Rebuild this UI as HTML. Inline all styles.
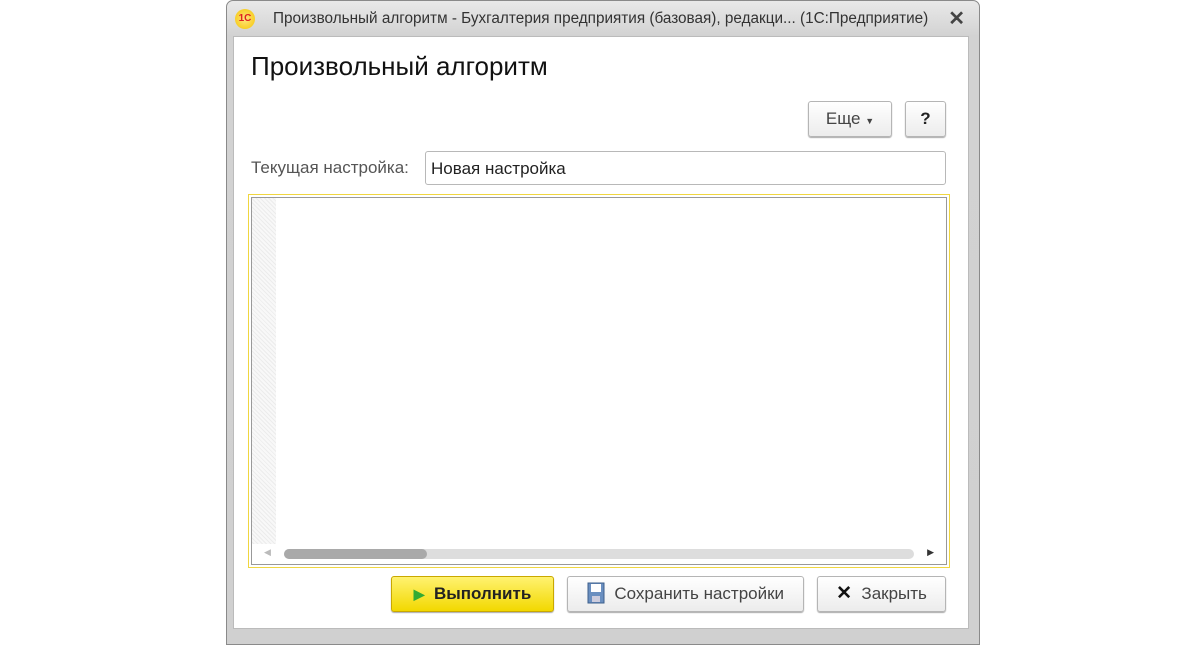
<!DOCTYPE html>
<html><head><meta charset="utf-8"><style>
*{box-sizing:border-box;margin:0;padding:0}
body{width:1200px;height:637px;background:#fff;position:relative;overflow:hidden;font-family:"Liberation Sans",Arial,sans-serif}
.win{position:absolute;left:226px;top:0;width:754px;height:645px;border:1px solid #8a8a8a;border-radius:7px 7px 0 0;background:linear-gradient(#e9e9e9,#d2d2d2 35px,#d0d0d0);}
.title{position:absolute;left:0;top:0;height:35px;width:100%;font-size:15.3px;color:#333;}
.title .t{position:absolute;left:46px;top:9px;}
.logo{position:absolute;left:8px;top:8px;width:20px;height:20px;border-radius:50%;background:radial-gradient(#ffe680,#f5c400);font-size:10px;font-weight:bold;color:#d22;text-align:center;line-height:20px}
.x{position:absolute;right:14px;top:5px;font-size:20px;color:#444;font-weight:bold}
.client{position:absolute;left:6px;top:35px;width:736px;height:593px;background:#fff;border:1px solid #bbb}
.h1{position:absolute;left:17px;top:14px;font-size:26px;color:#111}
.btn{position:absolute;border:1px solid #b5b5b5;border-radius:3px;background:linear-gradient(#fff,#ececec);box-shadow:0 1px 1px #aaa;font-size:17px;color:#444;text-align:center}
.lab{position:absolute;left:17px;top:121px;font-size:17px;color:#555}
.inp{position:absolute;left:191px;top:114px;width:521px;height:34px;border:1px solid #b8b8b8;border-radius:3px;padding:7px 5px;font-size:17px;color:#222}
.area{position:absolute;left:14px;top:157px;width:702px;height:374px;border:1px solid #f0d640}
.inner{position:absolute;left:2px;top:2px;right:2px;bottom:2px;border:1px solid #999}
.gut{position:absolute;left:0;top:0;width:24px;bottom:0;background:repeating-linear-gradient(45deg,#ececec 0 1px,#f8f8f8 1px 3px)}
.sb{position:absolute;left:0;right:0;bottom:0;height:20px;background:#fff}
.track{position:absolute;left:32px;right:32px;top:5px;height:10px;border-radius:5px;background:#ddd}
.thumb{position:absolute;left:0;top:0;width:143px;height:10px;border-radius:5px;background:#a9a9a9}
</style></head><body>
<div class="win">
 <div class="title"><div class="logo">1С</div><div class="t">Произвольный алгоритм - Бухгалтерия предприятия (базовая), редакци... (1С:Предприятие)</div><div class="x">✕</div></div>
 <div class="client">
  <div class="h1">Произвольный алгоритм</div>
  <div class="btn" style="left:574px;top:64px;width:84px;height:36px;line-height:34px">Еще <span style="font-size:9px">▼</span></div>
  <div class="btn" style="left:671px;top:64px;width:41px;height:36px;line-height:34px;font-weight:bold;color:#222">?</div>
  <div class="lab">Текущая настройка:</div>
  <div class="inp">Новая настройка</div>
  <div class="area"><div class="inner"><div class="gut"></div>
   <div class="sb"><span style="position:absolute;left:12px;top:3px;font-size:9px;color:#bbb">◀</span><div class="track"><div class="thumb"></div></div><span style="position:absolute;right:12px;top:3px;font-size:9px;color:#333">▶</span></div>
  </div></div>
  <div class="btn" style="left:157px;top:539px;width:163px;height:36px;line-height:34px;background:linear-gradient(#fff270,#f2d800);border-color:#c9a800;color:#222;font-weight:bold"><span style="color:#3a3;font-size:14px">▶</span>&nbsp; Выполнить</div>
  <div class="btn" style="left:333px;top:539px;width:237px;height:36px;line-height:34px">
   <svg width="18" height="22" viewBox="0 0 18 22" style="vertical-align:-5px"><rect x="1" y="1" width="16" height="20" fill="#6a8fc0" stroke="#3d5f8c"/><rect x="4" y="2" width="10" height="8" fill="#fff"/><rect x="5" y="14" width="8" height="6" fill="#ccd"/></svg>&nbsp; Сохранить настройки</div>
  <div class="btn" style="left:583px;top:539px;width:129px;height:36px;line-height:34px"><b style="color:#111;font-size:19px">✕</b>&nbsp; Закрыть</div>
 </div>
</div>
</body></html>
